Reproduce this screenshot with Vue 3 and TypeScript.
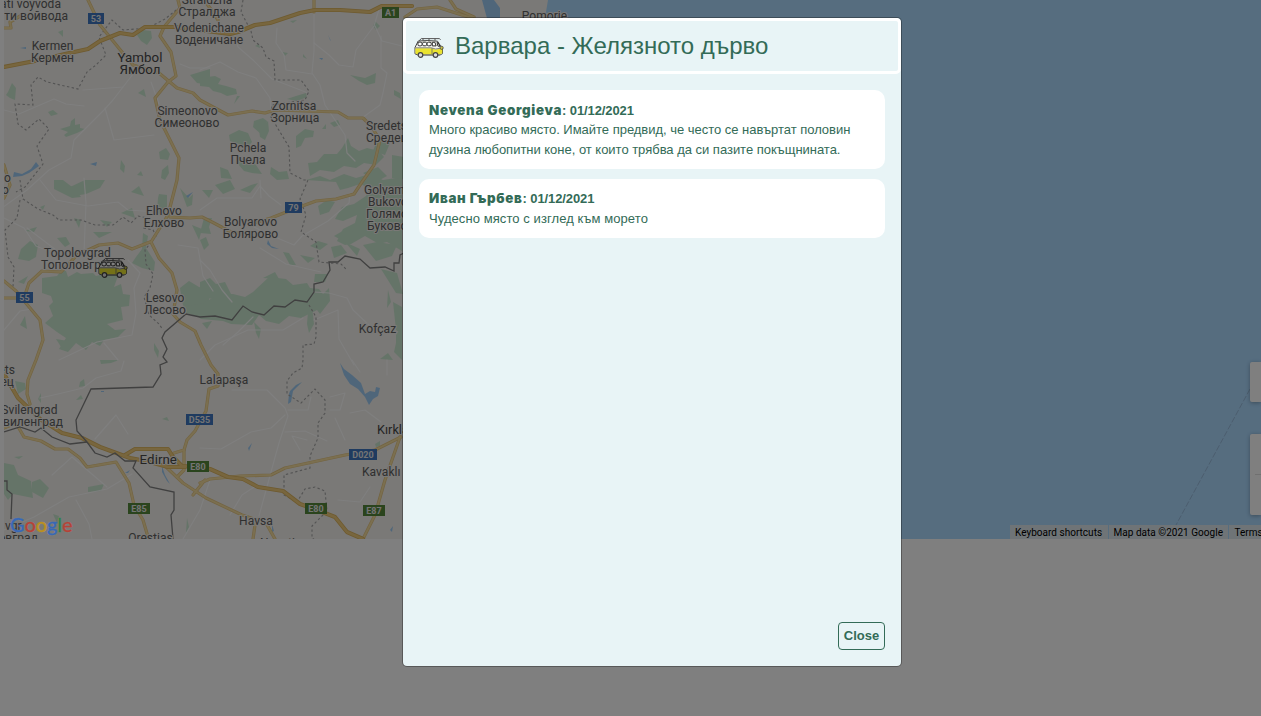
<script setup lang="ts">
type Anchor = 'start' | 'middle' | 'end'
interface Label { t: string; x: number; y: number; a?: Anchor; s?: number }
interface Badge { t: string; x: number; y: number; w: number; c: 'blue' | 'green' }
interface Comment { author: string; date: string; text: string }

const comments: Comment[] = [
  {
    author: 'Nevena Georgieva',
    date: '01/12/2021',
    text: 'Много красиво място. Имайте предвид, че често се навъртат половин дузина любопитни коне, от които трябва да си пазите покъщнината.',
  },
  { author: 'Иван Гърбев', date: '01/12/2021', text: 'Чудесно място с изглед към морето' },
]

const labels: Label[] = [
  { t: 'ati voyvoda', x: 61, y: 8, a: 'end' },
  { t: 'ти войвода', x: 68, y: 20, a: 'end' },
  { t: 'Kermen', x: 52.5, y: 50 },
  { t: 'Кермен', x: 52.5, y: 62 },
  { t: 'Yambol', x: 140, y: 62, s: 13.3 },
  { t: 'Ямбол', x: 140, y: 74, s: 13.3 },
  { t: 'Straldzha', x: 207, y: 4 },
  { t: 'Стралджа', x: 207, y: 16 },
  { t: 'Vodenichane', x: 209, y: 32 },
  { t: 'Воденичане', x: 209, y: 44 },
  { t: 'Simeonovo', x: 187.5, y: 115 },
  { t: 'Симеоново', x: 187, y: 127 },
  { t: 'Zornitsa', x: 294, y: 110 },
  { t: 'Зорница', x: 295, y: 122 },
  { t: 'Sredets', x: 366, y: 130, a: 'start' },
  { t: 'Средец', x: 366, y: 142, a: 'start' },
  { t: 'Pchela', x: 248, y: 152 },
  { t: 'Пчела', x: 248, y: 164 },
  { t: 'Golyamo', x: 364, y: 194, a: 'start' },
  { t: 'Bukovo', x: 368, y: 206, a: 'start' },
  { t: 'Голямо', x: 366, y: 218, a: 'start' },
  { t: 'Буково', x: 367, y: 230, a: 'start' },
  { t: 'Elhovo', x: 164, y: 215 },
  { t: 'Елхово', x: 164, y: 227 },
  { t: 'Bolyarovo', x: 250.5, y: 226 },
  { t: 'Болярово', x: 250.5, y: 238 },
  { t: 'Topolovgrad', x: 77.5, y: 257 },
  { t: 'Тополовград', x: 41, y: 269, a: 'start' },
  { t: 'Lesovo', x: 165, y: 302 },
  { t: 'Лесово', x: 165, y: 314 },
  { t: 'Kofçaz', x: 377.5, y: 333 },
  { t: 'Lalapaşa', x: 224, y: 384 },
  { t: 'ets', x: 15, y: 374, a: 'end' },
  { t: 'ец', x: 14, y: 386, a: 'end' },
  { t: 'Svilengrad', x: 57.5, y: 414, a: 'end' },
  { t: 'виленград', x: 63, y: 426, a: 'end' },
  { t: 'Kırklareli', x: 377, y: 434, a: 'start', s: 12.6 },
  { t: 'Kavaklı', x: 362, y: 476, a: 'start' },
  { t: 'Edirne', x: 158.3, y: 463.5, s: 13.3 },
  { t: 'Havsa', x: 256, y: 525 },
  { t: 'Orestias', x: 150.5, y: 542 },
  { t: 'vgr', x: 5, y: 530, a: 'start' },
  { t: 'овград', x: 38, y: 542, a: 'end' },
  { t: 'Necatiye', x: 260, y: 547, a: 'start' },
  { t: 'Pomorie', x: 544.5, y: 20 },
  { t: 'o', x: 4, y: 182, a: 'start' },
  { t: 'о', x: 2, y: 194, a: 'start' },
]

const badges: Badge[] = [
  { t: '53', x: 88, y: 13, w: 16, c: 'blue' },
  { t: 'A1', x: 382, y: 7, w: 17, c: 'green' },
  { t: '79', x: 285, y: 202, w: 17, c: 'blue' },
  { t: '55', x: 16, y: 292, w: 17, c: 'blue' },
  { t: 'D535', x: 186, y: 414, w: 27, c: 'blue' },
  { t: 'D020', x: 349, y: 449, w: 28, c: 'blue' },
  { t: 'E80', x: 187, y: 461, w: 22, c: 'green' },
  { t: 'E85', x: 128, y: 503, w: 22, c: 'green' },
  { t: 'E80', x: 305, y: 503, w: 22, c: 'green' },
  { t: 'E87', x: 363, y: 505, w: 22, c: 'green' },
]

const forests: string[] = [
  'M137 35l6-5 8 1 1 7-5 7-6-4z', 'M58 32l5-2v7z', 'M8 92l4-9 4 5-1 12-5-2-4-3z',
  'M190 75l20-6v16l-13-2z', 'M138 93l6-4 2 8z', 'M48 112l5-2 5 4-7 2z',
  'M60 129l10-3 1-5 4-3v7l5-1v4l5 1-8 4-11 4-2-2 4-3z', 'M121 160l4 6-1 7-4-4z',
  'M159 152l7-4 4 6-2 6-8-1z', 'M162 170l6-5 1 8-4 7-4-2z', 'M141 171l2 5-6-1z',
  'M200 78l15-2 6 3-3 5 8 2 10 3 1 5-10 2-6-3-8-2-4-4-9-1z', 'M234 104l3-8 3 0z',
  'M290 21l7-1-4 3z', 'M282 52l6 1-3 3z', 'M303 54l4 5-4-2z', 'M255 46l4-2 1 4z',
  'M350 75l15 3 11-5-1 10-8 2-8-4z', 'M375 21l5 5-4 4-3-4z', 'M394 90l6 3 1 6-7-4z',
  'M287 99l9-3 10-3 1 4-10 4z', 'M254 121l9-3 4 3-1 7-5 6-8-7z', 'M259 130l9-9 1 10-4 9-5-3z',
  'M296 136l9-7 9 2-1 6-8 1-4 8-5 2z', 'M322 129l4-5v5z', 'M330 123l8-3 2 5-6 2z',
  'M229 135l10-5 9 3 4 9-5 6-8-4-9-3z', 'M238 158l12 1 6 6 6 9-10-1-8-2-6-7z',
  'M220 167l8 3 4 9-11-1z', 'M271 167l8 5 8-1 2 8-12 1-7-6z',
  'M308 163l9-1 7-8 13 0 5-6 6-10 3 8 8 5 8-3 12 3 5 6-8 8-12-2-8 5-12-2-10 6-14-2-10 6z',
  'M306 180l14-4 10 4 14-6 12 4 14-4 13 6 19-3v74l-15-9-8 2-14-8-14 8-6 1-8-4 6-12 12-6 2-8-14 6-8-2 7-12 12-3 12-8 4-8-10-4-12 4-8 2-4-8z',
  'M318 206l9-6 8 2-6 10-9 3z', 'M334 236l12-7 9 3-12 9z', 'M310 246l8-5 10 3-8 6z',
  'M378 138l12 5-5 12-12-4z', 'M392 155l12 2v22l-12-1z', 'M363 173l15-6 9 9-11 6z',
  'M54 180l9 0 13 10 5 7-9 1-18-9z', 'M70 187l15-7 20 0-5 8-14 6-12 2z', 'M131 192l8-6 5 10z',
  'M158 198l1-4 8 1v15l-5 6-5-4z', 'M40 207l5-2-2 5z', 'M25 231l5-2 7-2-3 5z', 'M74 218l7 2-2 8z',
  'M121 213l11-5 3 10z', 'M100 220l12 2-5 5z', 'M180 188l9 10 4-4-1 11-5 2z', 'M93 232l19 0-13 6z',
  'M57 238l9-1 4 7-5 3z', 'M21 249l9-8 8 4-2 12-7 4-11-2z', 'M143 233l5 3-2 12 9 14-1 9-12-3-10-5 4-6 6-8z',
  'M42 278l15-2 4-5 5 0 2 6 9-5 4 2 12-1 3 3 8-2 15-1-5 14 7-3 2 10 7 1-1 11-8 1 2 13-16 4 8 6 11-1-8 8-14 3-4 6-8-4-6 8-10-7-8 9-9-3 7-11-9-6-12-9 8-7-4-10 4-4-2-6-9-3z',
  'M66 342l7-6-2 8z', 'M18 282l10-6-4 8z', 'M20 325l5-9 2 13z', 'M56 339l12 2-5 9z', 'M154 343l5 8-1 7-4-8z',
  'M180 288l9-7 10 6 10 3v15l-9 12-14-4-4-11z', 'M192 225l10 4-3 11z', 'M200 233l4-15 8 0-3 9 2 7z',
  'M202 190l11 0-4 8z', 'M215 185l15-5 5 9-12 5z', 'M240 190l10 3 8-10-7 2z',
  'M200 282l10-4 6 6 9-2 6 12 6 3-2 10-18-8-17-1z',
  'M186 306l18-3 13-8 16-1 12 3 8-5 16-15 17 2 7 6 14-2 3 5 9 1 4 5 6-6 1 13-10 13-3-4-16 8-12-2-10 8-13-3-7-6-7 10-21-1-8-3-22-2z',
  'M200 240l6-3 3 8-5 5z', 'M283 252l6 1 7 12-6 0z', 'M300 255l15 3-7 5z', 'M263 278l12-6 4 7z',
  'M315 274l13 0-3 8-11 0z', 'M331 247l10-2 6 8-13 5z', 'M345 242l15 7-3 7z', 'M363 245l14-3 20 3-5 11-16 5z',
  'M381 269l16 4 6 21-7-1z', 'M388 290l3 12-4 6z', 'M393 302l9 5v27l-6-4z', 'M396 335l6-9v34l-8-8 2-9z',
  'M308 311l4-5 2 18-5 9-2-9z', 'M254 322l7 7-2 10-3-6z', 'M216 313l4 1-3 5z', 'M202 323l10-2-5 8z',
  'M38 399l3-6v10z', 'M80 382l4-3 1 7-6 1z', 'M100 360l19 0-8 3-10 1z', 'M76 400l5-5 2 4z',
  'M15 381l10 2 1 6-8 5z', 'M162 419l5-2 2 4z', 'M4 463l10 2 4 10 13 6 2 17-10-2-10-2-5 6-4-6z',
  'M32 482l8-3 9 9-6 10-11-6z', 'M88 487l16-3-3 7-13 1z', 'M53 514l6 2-2 7z', 'M187 518l2 9-3 6z',
  'M375 444l5-3v5l-4 1z', 'M380 359l8-6 5 7z', 'M14 457l9-1-4 3z',
]

const lakes: string[] = [
  'M14 172l8 2 9-5 5-7 3 4-10 7-7 3-9 1z', 'M20 48l6-1v2z', 'M90 164l7-2-1 4z', 'M328 35l3 6-1-1z',
  'M319 58l4 0-1 2z', 'M186 196l7-4-5 6z', 'M268 240l3 6 8 3-7-1-5-4z',
  'M290 391l6-6 6-3-5 5-4 4-2 11-3 2 1-10z', 'M340 363l4 6 8 6 9 8 4 11 5-3 5 1 1-5 4 1-2 8-5 3-4 6-4-8-7-8-8-5-6-9z',
  'M248 448l4-5-3 8z', 'M162 466l3 9 5 9-3-3-5-9z', 'M390 530l3-4-1 6z', 'M272 524l2 7-2 1z',
  'M101 391h3v1h-3z', 'M125 473l5-3-2 3z', 'M482 0h12l6 8 0 14h-12z',
]

const minorRoads: string[] = [
  'M4 110l15 4 35-15 12 5 18 2', 'M83 90l40-3 14-18 18-12', 'M123 87l-10 13-9 10-30 30-3 18-22 12-22 20-25 18',
  'M105 108l9 32 40-5', 'M151 82l8 22', 'M180 64l10 4 20 0', 'M235 35l3 12 15 13 19 19 36 14',
  'M200 70l20-8 18 10 18 6 14 20 1 12', 'M314 13v38l-2 22 8 12 5 20 20 30 2 18 8 8', 'M314 43l15 12 10 10 14 2 3-17 18-24 6-20',
  'M375 26l7 15 20 5', 'M381 36v32l6 5-4 20-3 12-18 13', 'M277 28l-1 15 8 12 2 15 26 4', 'M4 218l20 10 12 18 12 5',
  'M27 228l29 22', 'M84 178l2 25-2 50', 'M40 180l16 20 32 6 30-4 10 8 30 2', 'M128 260l12 13-6 15 2 25-4 22-35 7-38 18',
  'M4 330l16-19 12-2', 'M104 343l14 17', 'M178 245l20 3 5 28 10 15', 'M200 210l17-12 35 0 8-12 9 10 12 9', 'M260 180l1 18',
  'M250 225l20 10 24 10 8-9 26-15 21-18 1-10', 'M260 248l26 16 35 8', 'M200 260l10 10 12 20 10 12',
  'M223 345l15-13 15-15', 'M200 360l15-15 33-15 35 0 20-12', 'M314 292l15 1 18 5 6 12 18 17', 'M314 320l24-10 1 29 15 26',
  'M40 398l18-4 25-6 13-10 25-7 3-10', 'M232 390l35 0 18 18 3 8-9 27-5 18-15 55', 'M285 415l-14 13-20 4-30 17-21-1',
  'M288 410l20 0 3-13', 'M285 432l20-1 22 10', 'M300 450l-8-14 15 4', 'M330 410l10 0 5-17-15 4', 'M350 413l15-3 16 12',
  'M4 530l30-13 35-20 38-8 25-15', 'M95 439l21-24 12 19', 'M52 475l20-18 35 30', 'M76 500l13 24 3 15', 'M338 500l22 2 10-15',
  'M335 418l10 22', 'M352 360l8 12', 'M387 375v-15', 'M210 480l-10 30-17 29', 'M230 515l12-20 15-10',
]

const yellowRoads: string[] = [
  'M88 0l12 25 22 27 11 13 26 8 18 15 16 5 7 7 28 15 24-4 13 2 10-3 63 2 10 6 15 0 8 8 9 14-6 25-12 17-8 12-18 5-20 2-22 8-23 9-20 6',
  'M4 28h7l-1-6 12-7', 'M178 0l2 8-16 19-4 9 11 16 5 24-8 6-13 16 5 22 19 38-2 22-9 35-17 27 8 16 13 15 5 17-4 24 7 8 15 9 6 14 10 20 7 9v12l-9 3-3 22-11 20-8 9-3 10-10 3',
  'M170 217l20 1 12-1 10 5 17 9 16 4', 'M150 242l-18 7-14-6-19 2-22 10-16 17-19-1-13 12-5 15H4', 'M4 281l12 10 9 11 15 18 3 20-7 20-8 20-1 14 3 10',
  'M314 0v12', 'M4 428l12-5 8 14 17 4 14 8 13 0 12 9 7 9 29-5 13 21 5 22 9 15 5 17', 'M200 483l10-4 30-3 31-1 14-7 60-13 30-5 26-13',
  'M400 437l-15 43-10 35-12 24', 'M163 464l20 19 23 15 36 17 24 8 9 16', 'M255 525l-2 14', 'M204 0l6 8 8 12', 'M4 198l6-13-6-20',
  'M205 480l-12 15M184 450v20l-7 7', 'M405 17l12-8 20-2 25 8 10 3M450 0l6 9 18 8',
]

const motorways: string[] = [
  'M4 67l36-7 25-6 23-5 12-8 20-8 13 2 12-8h30l55 7 8-2 17-7 15-2 30-10 15-3h25l30 2 12-6h30',
  'M4 374l14 24 22 21 22 14 20 5 18 9 30 11 16 3 22 6 17 0', 'M125 455l10-6h33l5 8 9 9 15 1 13 2 18 8 15 2 15 8 25 4 17 13 17 6 18 7 12 15 16 7',
]

const borders: string[] = [
  'M404 253l-4 2-1 8-5 0v8l-9-4-15 1-10-9-15-3-7 6h-9l1 8-7 12-9 2v8l-7 10-12-2-10 7-11-1-10 9-12-3-9-6-11 14-17-4-15 1-14-3-21 18-3 6 5 11-4 8 4 5-7 3 1 9-8 13-62 2-15 31 1 11 10 11 8 11 12 4 8-4 10 8h11l-3 7 17 19 24 5v18l-3 5 2 24',
  'M87 442l-17 2-18-7-11-9-6 4-15-5-16 5', 'M4 481h3v9l5 4-1 25',
]

const districtLines: string[] = [
  'M180 7l-15 12-17 9-25 2-11-10-13 17 7 18-10 10-9 7-9 17-31-7-9-5-7 8 2 20-18-1 3 20 8 6 13-11 10 10-12 17 6 18-18 23-9 5',
  'M243 0l-2 12 10 19 2 9 10 8 3 9 8 4 1 19h26l8 11-4 9-33 5-1 12 18 30 1 26 14 7 4 0-8 19 6 16-5 17 15 10 3 20 22 2 5 5',
  'M20 180l3 19 15 10 15 6 6 5 22 0 14 5h18l10-8 8 6 7-7 9 2-3 10 9 2 3 6-11 14 1 14 7 10-3 14-6 9 5 18 10 9 4 6',
  'M20 200l-3 18-12 12 3 27 6 10-1 20', 'M309 305l7 12v20l-2 7-11 1v15l-1 8-9 5-6 8v13l14 9 14-14 10 11v13l-7 10v15l-8 18v12l-26 7v20l13 7 8-13 10-2 10 4 2 20-15 15v12l10 7-11 15',
]
</script>

<template>
  <div class="page">
    <svg class="map" width="1257" height="539" viewBox="4 0 1257 539">
      <rect x="4" width="1257" height="539" class="land" />
      <path d="M548 0H1261V539H700V200L545 18z" class="water" />
      <path v-for="(d, i) in forests" :key="'f' + i" :d="d" class="forest" />
      <path v-for="(d, i) in lakes" :key="'l' + i" :d="d" class="water lake" />
      <path v-for="(d, i) in minorRoads" :key="'m' + i" :d="d" class="road minor" />
      <path v-for="(d, i) in districtLines" :key="'d' + i" :d="d" class="district" />
      <path v-for="(d, i) in yellowRoads" :key="'ye' + i" :d="d" class="road edge" />
      <path v-for="(d, i) in yellowRoads" :key="'y' + i" :d="d" class="road yellow" />
      <path v-for="(d, i) in motorways" :key="'we' + i" :d="d" class="road way-edge" />
      <path v-for="(d, i) in motorways" :key="'w' + i" :d="d" class="road way" />
      <path v-for="(d, i) in borders" :key="'b' + i" :d="d" class="border" />
      <path d="M1250 389L1176 525" class="sea-line" />
      <g v-for="(b, i) in badges" :key="'s' + i">
        <rect :x="b.x" :y="b.y" :width="b.w" height="11" :class="b.c" />
        <text :x="b.x + b.w / 2" :y="b.y + 9" text-anchor="middle" class="badge-text">{{ b.t }}</text>
      </g>
      <text
        v-for="(l, i) in labels"
        :key="'t' + i"
        :x="l.x"
        :y="l.y"
        :text-anchor="l.a ?? 'middle'"
        :font-size="l.s ?? 12"
        :class="['label', { city: l.s }]"
      >{{ l.t }}</text>
      <svg x="98" y="257" width="30" height="22" viewBox="0 0 30 22"><use href="#van" /></svg>
    </svg>

    <div class="control pegman"></div>
    <div class="control zoom"><span></span></div>
    <div class="attribution">
      <span>Keyboard shortcuts</span><span>Map data ©2021 Google</span><span>Terms of Use</span>
    </div>
    <div class="backdrop"></div>
    <div class="logo"><i class="b">G</i><i class="r">o</i><i class="y">o</i><i class="b">g</i><i class="g">l</i><i class="r">e</i></div>

    <section class="modal" role="dialog">
      <header class="modal-header">
        <svg class="van" width="30" height="22" viewBox="0 0 30 22">
          <g id="van">
            <path d="M5 3.8L7.3 1.6H25.5l1 1.2M9 1.6v2M15 1.6v2M21 1.6v2" fill="none" stroke="#555" stroke-width="1" />
            <path d="M4.2 4Q14 3 23.5 4.2L27 9.6 28.5 11.5V16.6L26 18H4L1 16.8V10.5z" fill="#f4f4ee" stroke="#444" stroke-width="1" />
            <path d="M1.4 11.2H17.5l4 1.4 6.8-1.2V16.2L26 17.6H4L1.4 16.4z" fill="#e9e330" />
            <rect x="4" y="5.2" width="4" height="3.6" rx="1.2" fill="#fff" stroke="#2c2c2c" stroke-width="1" />
            <rect x="8.6" y="5.2" width="4" height="3.6" rx="1.2" fill="#fff" stroke="#2c2c2c" stroke-width="1" />
            <rect x="13.2" y="5.2" width="4" height="3.6" rx="1.2" fill="#fff" stroke="#2c2c2c" stroke-width="1" />
            <path d="M18.3 5.3h2.6l1.2 3.6h-3.8zM23 5.4h.8l2.2 3.8h-2z" fill="#fff" stroke="#2c2c2c" stroke-width="1" />
            <path d="M1.4 10.8H17.5l4 1.2 6.2-1M18 11V17M4 17.8h22" fill="none" stroke="#666" stroke-width=".8" />
            <circle cx="6.5" cy="18" r="2.3" fill="#ddd" stroke="#444" stroke-width="1.2" />
            <circle cx="21.5" cy="18" r="2.3" fill="#ddd" stroke="#444" stroke-width="1.2" />
            <circle cx="27.6" cy="10.8" r="1.6" fill="#c9c447" stroke="#444" stroke-width=".8" />
          </g>
        </svg>
        <h1>Варвара - Желязното дърво</h1>
      </header>
      <div class="modal-body">
        <article v-for="c in comments" :key="c.author" class="comment">
          <div class="meta"><strong>{{ c.author }}</strong><b>: {{ c.date }}</b></div>
          <p>{{ c.text }}</p>
        </article>
      </div>
      <footer class="modal-footer"><button type="button">Close</button></footer>
    </section>
  </div>
</template>

<style>
body { background: #808080; overflow: hidden; }
</style>

<style scoped>
.page { position: relative; width: 1261px; height: 716px; overflow: hidden; background: #fff; font-family: "Liberation Sans", Arial, sans-serif; }
.map { display: block; margin-left: 4px; }
.land { fill: #f4f2ee; }
.water { fill: #acdaff; }
.lake { fill: #9fcdf5; }
.forest { fill: #cbe8d1; }
.road { fill: none; stroke-linejoin: round; stroke-linecap: round; }
.minor { stroke: #fff; stroke-width: 1.2; opacity: .9; }
.edge { stroke: #e6c681; stroke-width: 3.2; }
.yellow { stroke: #f6dfa0; stroke-width: 1.9; }
.way-edge { stroke: #dcb45e; stroke-width: 4.2; }
.way { stroke: #f0cc7c; stroke-width: 2.6; }
.border { fill: none; stroke: #808080; stroke-width: 1.3; }
.district { fill: none; stroke: #a6a6a6; stroke-width: 1.1; stroke-dasharray: 2.4 2.4; }
.sea-line { fill: none; stroke: #98bbdc; stroke-width: 1; stroke-dasharray: 6 2; }
.blue { fill: #3e76c0; }
.green { fill: #55893b; }
.badge-text { font: 700 9px Roboto, sans-serif; fill: #e8e8e8; }
.label { font-family: Roboto, sans-serif; fill: #606060; stroke: #f4f2ee; stroke-width: 2px; paint-order: stroke; letter-spacing: .05px; }
.city { fill: #484848; }
.control { position: absolute; right: 0; width: 11px; background: #fff; border-radius: 2px 0 0 2px; box-shadow: 0 1px 4px rgba(0, 0, 0, .3); }
.pegman { top: 362px; height: 40px; }
.zoom { top: 434px; height: 81px; }
.zoom span { display: block; margin: 40px 0 0 5px; height: 1px; background: #e0e0e0; }
.attribution { position: absolute; left: 1010px; top: 525px; width: 251px; height: 14px; display: flex; overflow: hidden; white-space: nowrap; font: 10px/15px Roboto, sans-serif; color: #000; }
.attribution span { padding: 0 5.5px 0 5px; background: #dfe9ef; margin-right: 1px; letter-spacing: .02px; }
.backdrop { position: absolute; inset: 0; background: rgba(0, 0, 0, .5); }
.logo { position: absolute; left: 10px; top: 512px; font: 500 20px/25px Lato, sans-serif; letter-spacing: -.1px; text-shadow: 0 0 1px #999; }
.logo i { font-style: normal; -webkit-text-stroke: .3px; }
.b { color: #3868b5; }
.r { color: #b34338; }
.y { color: #b98f20; }
.g { color: #318047; }
.modal { position: absolute; left: 402px; top: 17px; width: 500px; height: 650px; box-sizing: border-box; display: flex; flex-direction: column; background: #e8f4f6; background-clip: padding-box; border: 1px solid rgba(0, 0, 0, .3); border-radius: 5px; color: #336b57; }
.modal-header { height: 56px; box-sizing: border-box; display: flex; align-items: center; border: 3px solid #fff; border-radius: 5px; padding-left: 8px; }
.van { margin-top: 3px; }
h1 { margin: 0 0 0 11px; font-size: 24px; line-height: 36px; font-weight: 400; white-space: nowrap; }
.modal-body { flex: 1; padding: 16px; display: flex; flex-direction: column; gap: 10px; }
.comment { padding: 10.5px 10px 9.5px; background: #fff; border-radius: 10px; font-size: 13px; line-height: 19.5px; letter-spacing: -.02px; }
.comment:last-child { letter-spacing: .08px; }
.meta { height: 19.5px; white-space: nowrap; }
.meta strong { font-family: Inter, sans-serif; font-weight: 900; font-size: 13.3px; letter-spacing: .7px; }
.meta b { letter-spacing: -.1px; }
p { margin: 0; }
.modal-footer { padding: 0 16px 16px; display: flex; justify-content: flex-end; }
button { width: 47px; height: 28px; padding: 0 0 2px; border: 1px solid #336b57; border-radius: 4px; background: transparent; color: #336b57; font: 700 13px "Liberation Sans", Arial, sans-serif; }
</style>
